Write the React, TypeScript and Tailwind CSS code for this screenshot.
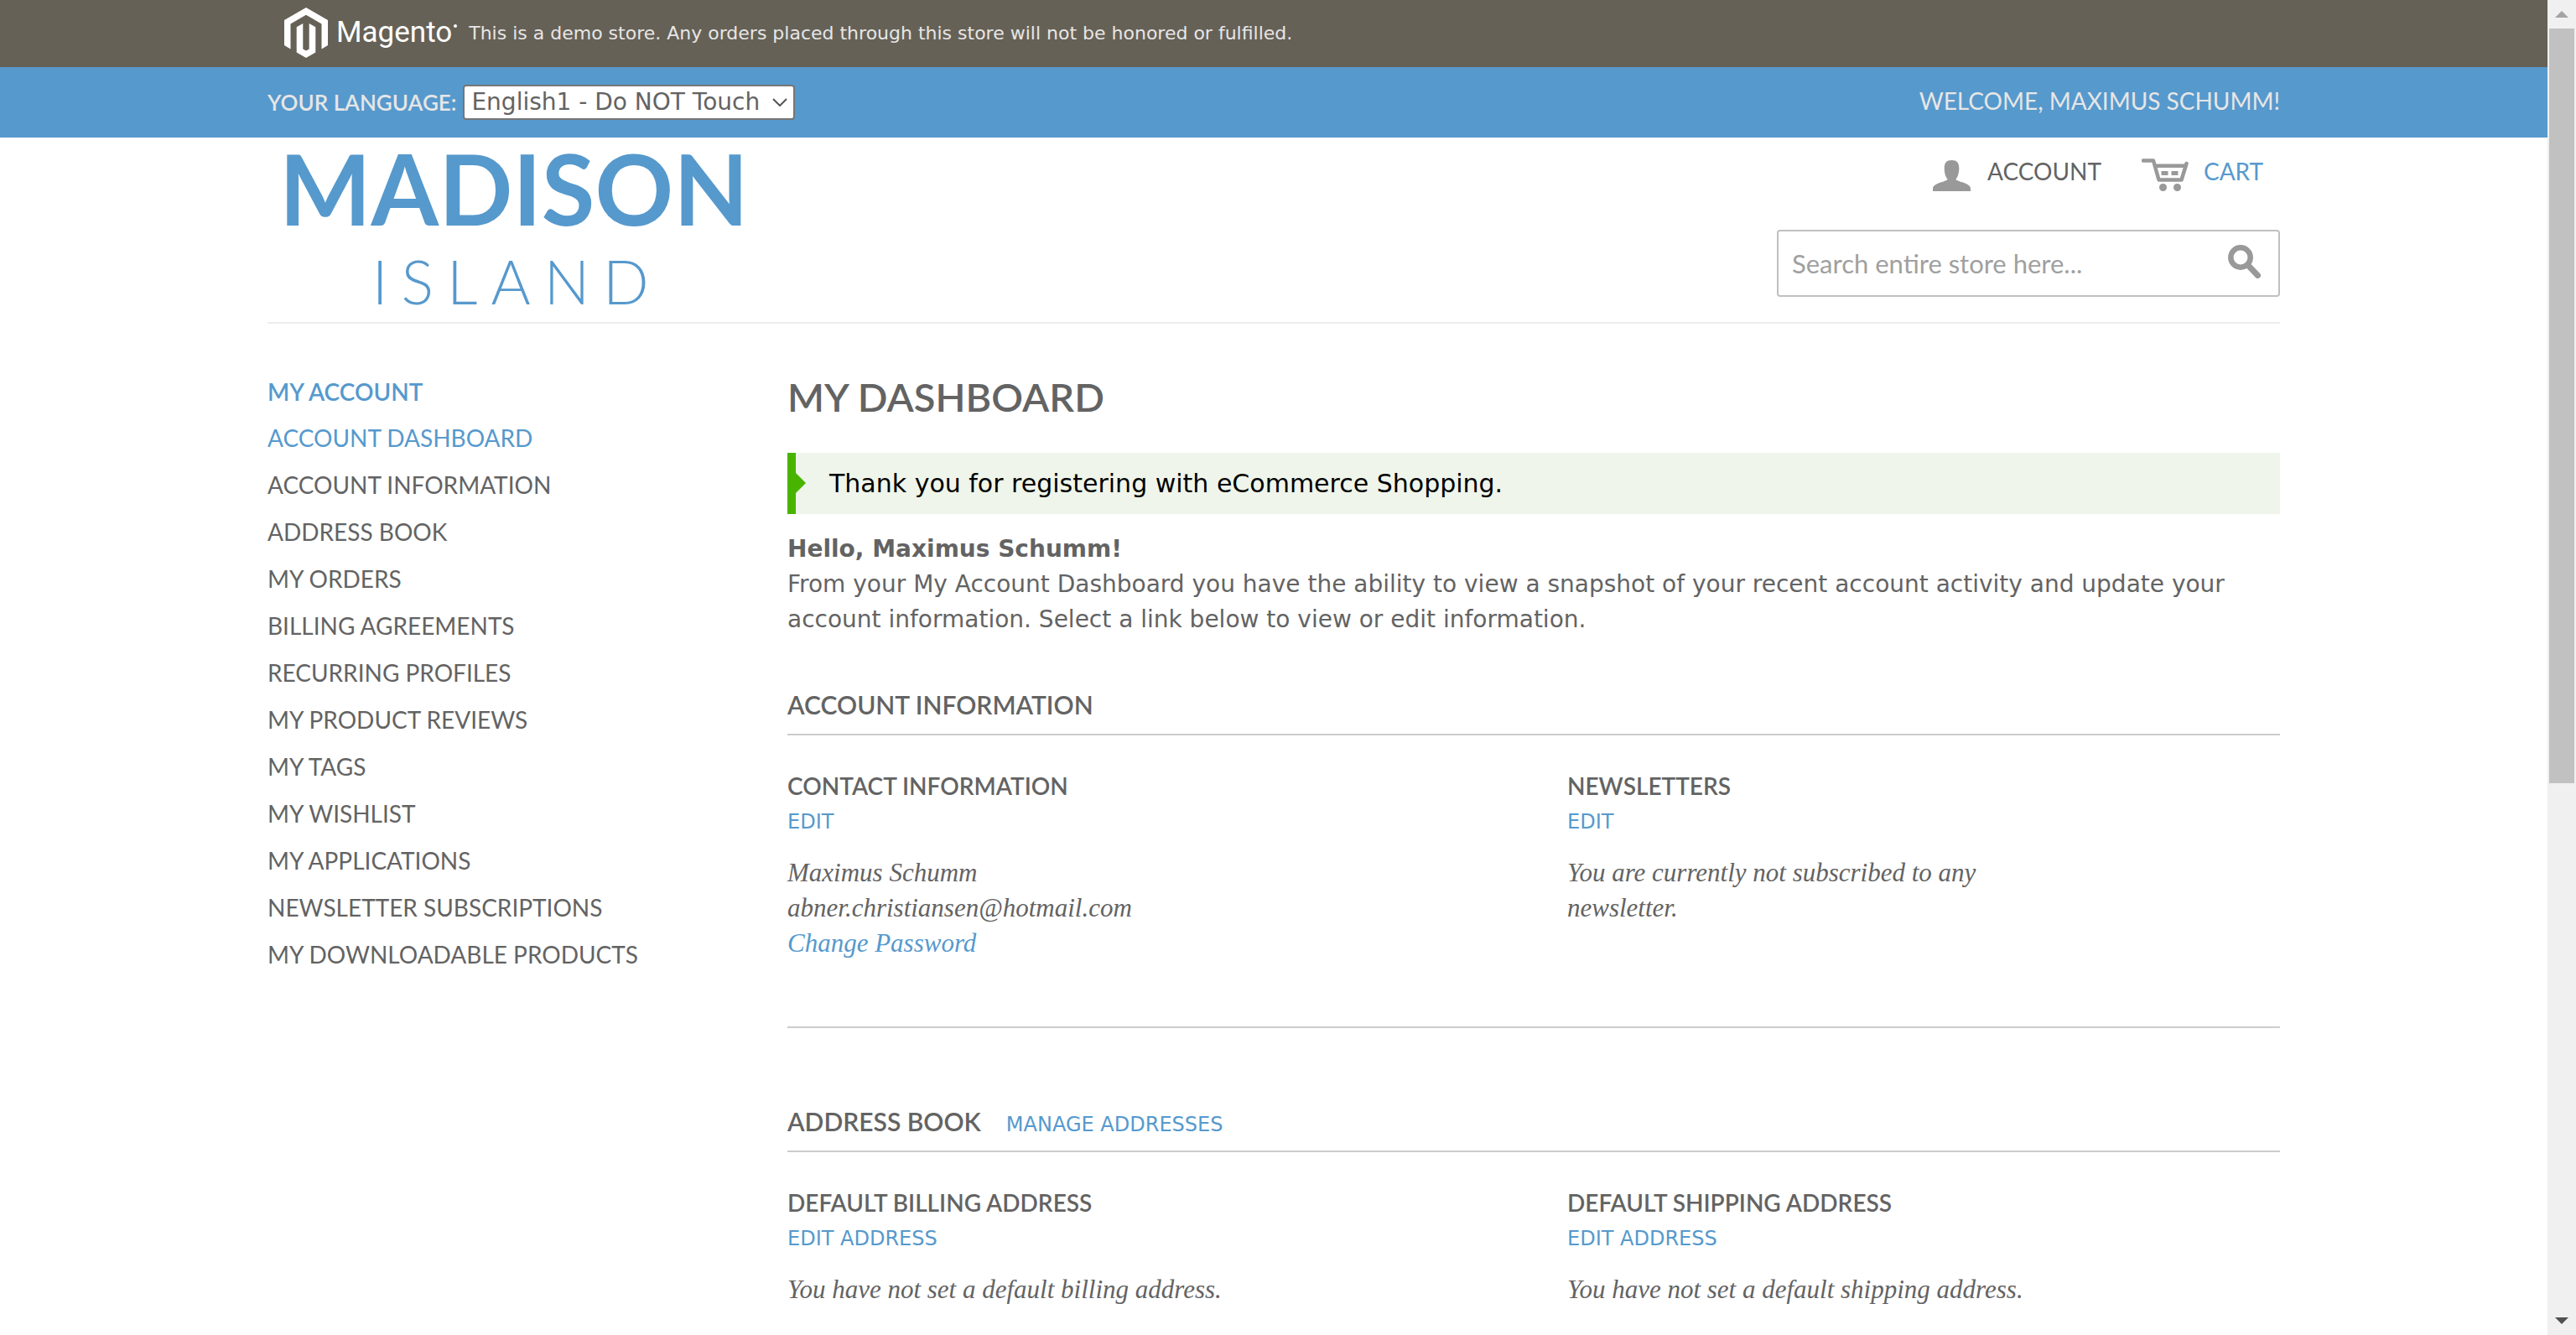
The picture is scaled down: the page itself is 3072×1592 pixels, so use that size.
import React from "react";

const navItems = [
  "Account Dashboard",
  "Account Information",
  "Address Book",
  "My Orders",
  "Billing Agreements",
  "Recurring Profiles",
  "My Product Reviews",
  "My Tags",
  "My Wishlist",
  "My Applications",
  "Newsletter Subscriptions",
  "My Downloadable Products",
];

function MagentoMark() {
  return (
    <svg className="h-[60px] w-[52px]" viewBox="0 0 52 60" fill="#fff" aria-hidden="true">
      <path d="M26 0 52 15v30l-7.5 4.4v-30L26 8.7 7.5 19.4v30L0 45V15Z" />
      <path d="M22.3 19v30.5l3.7 2.1 3.7-2.1V19l7.6 4.2v30.4L26 60l-11.3-6.4V23.2Z" />
    </svg>
  );
}

function PersonIcon() {
  return (
    <svg className="h-[37px] w-[45px]" viewBox="0 0 45 37" fill="#999" aria-hidden="true">
      <path d="M22.5 0c6 0 8.800 3 8.800 9.500 0 5-1.300 10.500-4 13.500 1.500 1.600 4.500 2.200 8.500 3.500C42 28.600 45 31 45 34v3H0v-3c0-3 3-5.400 9.200-7.500 4-1.300 7-1.900 8.500-3.500-2.700-3-4-8.500-4-13.500C13.700 3 16.500 0 22.500 0Z" />
    </svg>
  );
}

function CartIcon() {
  return (
    <svg className="h-[39px] w-[56px]" viewBox="0 0 56 39" aria-hidden="true">
      <path
        d="M2 2.500h12l6.500 23h27L53.500 6"
        fill="none"
        stroke="#999"
        strokeWidth="4.500"
        strokeLinecap="round"
        strokeLinejoin="round"
      />
      <path d="M15 8.800h38" stroke="#999" strokeWidth="4.500" />
      <path d="M23.500 15h8v5h-8zM35.500 15h8v5h-8z" fill="#999" />
      <circle cx="25.500" cy="34.500" r="4.500" fill="#999" />
      <circle cx="42.500" cy="34.500" r="4.500" fill="#999" />
    </svg>
  );
}

function SearchIcon() {
  return (
    <svg className="h-10 w-10" viewBox="0 0 40 40" fill="none" stroke="#999" aria-hidden="true">
      <circle cx="15" cy="15" r="11.700" strokeWidth="6.500" />
      <path d="m25 25.500 10.500 11" strokeWidth="7" strokeLinecap="round" />
    </svg>
  );
}

function SectionTitle({ title, link }: { title: string; link?: string }) {
  return (
    <div className="flex items-baseline gap-[30px] border-b-2 border-[#ccc] pb-[14px]">
      <h2 className="font-[Lato,sans-serif] text-[30px] leading-[42px] font-semibold uppercase">{title}</h2>
      {link && (
        <a href="#" className="text-2xl leading-none text-[#5699cd] uppercase">
          {link}
        </a>
      )}
    </div>
  );
}

function Box({ title, link, children }: { title: string; link: string; children: React.ReactNode }) {
  return (
    <section>
      <h3 className="font-[Lato,sans-serif] text-[28px] leading-[42px] font-semibold uppercase">{title}</h3>
      <a href="#" className="block w-fit text-2xl leading-[44px] text-[#5699cd] uppercase">
        {link}
      </a>
      <div className="mt-[18px] w-2/3 font-['Liberation_Serif',serif] text-[31px] leading-[42px] italic">
        {children}
      </div>
    </section>
  );
}

function Scrollbar() {
  return (
    <div className="flex w-[34px] shrink-0 flex-col items-center bg-[#f0f0f0]" aria-hidden="true">
      <div className="flex h-[34px] items-center justify-center">
        <svg className="h-2 w-4" viewBox="0 0 16 8" fill="#a3a3a3">
          <path d="m8 0 8 8H0z" />
        </svg>
      </div>
      <div className="h-[900px] w-[30px] bg-[#c1c1c1]" />
      <div className="mt-auto flex h-[34px] items-center justify-center">
        <svg className="h-2 w-4" viewBox="0 0 16 8" fill="#505050">
          <path d="m8 8 8-8H0z" />
        </svg>
      </div>
    </div>
  );
}

export default function App() {
  return (
    <div className="flex h-screen overflow-hidden bg-white font-['DejaVu_Sans',sans-serif] text-[28px] text-[#636363]">
      <div className="min-w-0 flex-1 overflow-hidden">
        <div className="bg-[#666156]">
          <div className="mx-auto flex h-20 max-w-[2400px] items-center pb-0.5 pl-5 text-[#e6e6e6]">
            <MagentoMark />
            <span className="ml-2.5 font-[Roboto,sans-serif] text-[35px] text-white">Magento</span>
            <span className="mb-4 ml-0.5 size-1 rounded-full bg-white" />
            <p className="ml-[14px] text-[22px]">
              This is a demo store. Any orders placed through this store will not be honored or fulfilled.
            </p>
          </div>
        </div>

        <div className="bg-[#5699cd]">
          <div className="mx-auto flex h-[84px] max-w-[2400px] items-center justify-between font-[Lato,sans-serif] text-[#e6e6e6] uppercase">
            <div className="flex items-center gap-2">
              <label htmlFor="language" className="text-[26px] font-semibold">
                Your Language:
              </label>
              <div className="relative flex">
                <select
                  id="language"
                  className="h-[42px] appearance-none rounded border-2 border-[#767676] bg-white pr-10 pl-2 font-['DejaVu_Sans',sans-serif] text-[28px] leading-[38px] text-[#636363]"
                >
                  <option>English1 - Do NOT Touch</option>
                </select>
                <svg
                  className="pointer-events-none absolute top-4 right-2 h-2.5 w-5"
                  viewBox="0 0 20 10"
                  fill="none"
                  stroke="#555"
                  strokeWidth="2"
                  aria-hidden="true"
                >
                  <path d="m2 1 8 8 8-8" />
                </svg>
              </div>
            </div>
            <p className="pb-1">Welcome, Maximus Schumm!</p>
          </div>
        </div>

        <header className="mx-auto flex max-w-[2400px] items-start justify-between border-b-2 border-[#ededed] pb-2.5 font-[Lato,sans-serif]">
          <a href="#" className="ml-[14px] flex flex-col items-center gap-5 pt-2.5 text-[#5699cd]">
            <span className="text-[116px] leading-[102px] font-bold">MADISON</span>
            <span className="pl-2 text-[72px] leading-[78px] font-light tracking-[16px]">ISLAND</span>
          </a>
          <div className="flex w-[600px] flex-col pt-4">
            <div className="flex items-end justify-end gap-12 pr-5 leading-[48px] uppercase">
              <a href="#" className="flex items-end gap-5">
                <PersonIcon />
                Account
              </a>
              <a href="#" className="flex items-end gap-[18px] text-[#5699cd]">
                <CartIcon />
                Cart
              </a>
            </div>
            <form className="mt-[46px] flex h-20 items-center rounded border-2 border-[#c0c0c0] pr-5 pl-4">
              <input
                type="search"
                aria-label="Search"
                placeholder="Search entire store here..."
                className="min-w-0 flex-1 text-[31px] outline-none placeholder:text-[#a0a0a0]"
              />
              <button type="button" aria-label="Search" className="pb-1">
                <SearchIcon />
              </button>
            </form>
          </div>
        </header>

        <div className="mx-auto flex max-w-[2400px]">
          <nav className="w-[620px] shrink-0 pt-[60px] font-[Lato,sans-serif] uppercase">
            <h2 className="leading-[42px] font-semibold text-[#5699cd]">My Account</h2>
            <ul className="mt-1.5">
              {navItems.map((item, i) => (
                <li key={item} className="leading-[56px]">
                  <a href="#" className={i === 0 ? "text-[#5699cd]" : ""}>
                    {item}
                  </a>
                </li>
              ))}
            </ul>
          </nav>

          <main className="min-w-0 flex-1 pt-[58px]">
            <h1 className="font-[Lato,sans-serif] text-[47px] leading-[58px] font-semibold uppercase">My Dashboard</h1>

            <div className="relative mt-[38px] border-l-10 border-[#48b400] bg-[#eff5ea] py-[14px] pl-10 text-[30px] leading-[45px] text-black">
              <svg className="absolute top-6 left-0 h-6 w-3" viewBox="0 0 12 24" fill="#48b400" aria-hidden="true">
                <path d="m0 0 12 12L0 24z" />
              </svg>
              Thank you for registering with eCommerce Shopping.
            </div>

            <div className="mt-[21px] leading-[42px]">
              <p className="font-bold">Hello, Maximus Schumm!</p>
              <p>
                From your My Account Dashboard you have the ability to view a snapshot of your recent account activity
                and update your account information. Select a link below to view or edit information.
              </p>
            </div>

            <div className="mt-[59px]">
              <SectionTitle title="Account Information" />
              <div className="mt-[39px] grid grid-cols-2 gap-20 border-b-2 border-[#ccc] pb-[78px]">
                <Box title="Contact Information" link="Edit">
                  <p>Maximus Schumm</p>
                  <p>abner.christiansen@hotmail.com</p>
                  <a href="#" className="text-[#5699cd]">
                    Change Password
                  </a>
                </Box>
                <Box title="Newsletters" link="Edit">
                  <p>You are currently not subscribed to any newsletter.</p>
                </Box>
              </div>
            </div>

            <div className="mt-[90px]">
              <SectionTitle title="Address Book" link="Manage Addresses" />
              <div className="mt-[39px] grid grid-cols-2 gap-20">
                <Box title="Default Billing Address" link="Edit Address">
                  <p>You have not set a default billing address.</p>
                </Box>
                <Box title="Default Shipping Address" link="Edit Address">
                  <p>You have not set a default shipping address.</p>
                </Box>
              </div>
            </div>
          </main>
        </div>
      </div>
      <Scrollbar />
    </div>
  );
}
